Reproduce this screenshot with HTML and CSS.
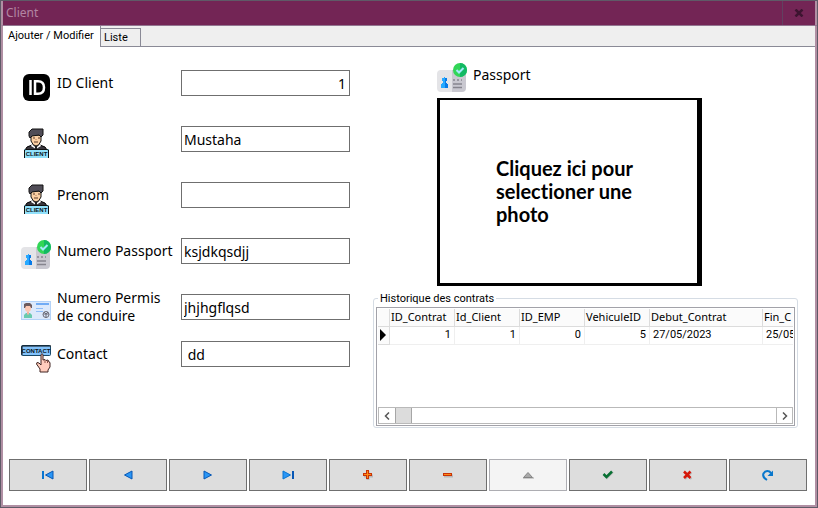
FILE: index.html
```html
<!DOCTYPE html>
<html lang="fr">
<head>
<meta charset="utf-8">
<title>Client</title>
<link rel="stylesheet" href="styles.css">
</head>
<body>
<svg class="defs" aria-hidden="true">
  <defs>
    <symbol id="client" viewBox="0 0 30 30">
      <path d="M4 22 6 19 11 17H19L24 19 26 22Z" fill="#39363d" stroke="#000"/>
      <path d="M11 16 15 20 19 16 20 18 15 21 10 18Z" fill="#fff"/>
      <path d="M14 18H16V21H14Z" fill="#222"/>
      <path d="M10 7H20V13Q18 18 15 18Q12 18 10 13Z" fill="#fbd0a4" stroke="#111"/>
      <path d="M8 8V4L11 1H22V7L20 9 18 7 11 8 9 10Z" fill="#504d57" stroke="#111"/>
      <path d="M12 10H14M17 10H19M13 14H17" stroke="#5a3928"/>
      <path d="M15 11V12" stroke="#b87c55"/>
      <path d="M3 21H28V30H3Z" fill="#92e1fb"/>
      <path d="M3.500 30V22L5 21.500H26L27.500 22V30" fill="none" stroke="#111"/>
      <text x="15.500" y="28" text-anchor="middle" class="tag">CLIENT</text>
    </symbol>
    <symbol id="passport" viewBox="0 0 30 30">
      <path d="M4 7H15V29H4Q0 29 0 25V11Q0 7 4 7Z" fill="#e4e4e7"/>
      <path d="M15 7H29V25Q29 29 25 29H15Z" fill="#c9c8d0"/>
      <path d="M7 14H8V15H10V18H9V20H10V21H11V25H4V21H5V20H6V18H5V15H7Z" fill="#27a9ff"/>
      <path d="M8 15H10V18H9V20H10V21H11V25H8Z" fill="#087be8"/>
      <path d="M16 17H18M20 17H22M24 17H25M16 21H25M16 24.500H25" stroke="#86858e" stroke-width="1.500"/>
      <circle cx="23" cy="7" r="7" fill="#32d657"/>
      <path d="M23 0A7 7 0 0 1 23 14Z" fill="#12b964"/>
      <path d="M19.500 7 22 9.500 26.500 5" fill="none" stroke="#a4e9fb" stroke-width="2"/>
    </symbol>
  </defs>
</svg>
<div class="window">
  <header class="titlebar">
    <h1>Client</h1>
    <button class="close" type="button" aria-label="Fermer">
      <svg width="10" height="8" viewBox="0 0 10 8"><path d="M1.500 .5 8.500 7.500M8.500 .5 1.500 7.500" stroke="#3d1430" stroke-width="2.500"/></svg>
    </button>
  </header>
  <nav class="tabs" role="tablist">
    <button class="tab active" type="button" role="tab" aria-selected="true">Ajouter / Modifier</button>
    <button class="tab" type="button" role="tab" aria-selected="false">Liste</button>
  </nav>
  <main class="page">
    <div class="columns">
      <form class="fields">
        <div class="field">
          <svg class="icon" viewBox="0 0 30 30"><rect x="2" y="2" width="27" height="27" rx="6"/><path d="M9.500 8V23M14 9.250H17Q23 9.250 23 15.500T17 21.750H14Z" fill="none" stroke="#fff" stroke-width="2.500"/></svg>
          <label for="id">ID Client</label><input id="id" class="number" value="1">
        </div>
        <div class="field">
          <svg class="icon"><use href="#client"/></svg>
          <label for="nom">Nom</label><input id="nom" value="Mustaha">
        </div>
        <div class="field">
          <svg class="icon"><use href="#client"/></svg>
          <label for="prenom">Prenom</label><input id="prenom">
        </div>
        <div class="field">
          <svg class="icon"><use href="#passport"/></svg>
          <label for="num">Numero Passport</label><input id="num" value="ksjdkqsdjj">
        </div>
        <div class="field">
          <svg class="icon" viewBox="0 0 30 30">
            <rect y="5" width="30" height="19" fill="#b4d3f8"/><rect x="1" y="6" width="28" height="17" fill="#dce9fb"/>
            <path d="M3 22V19L5 17H9L11 19V22Z" fill="#69caae"/><path d="M6 15H8V18L7 19 6 18Z" fill="#f2b3a0"/>
            <path d="M4 9H10V14L8 16H6L4 14Z" fill="#fbc7b3"/><path d="M3 12V8L5 7H9L11 9V12H10L9 10H5L4 12Z" fill="#6b5a5e"/>
            <path d="M15 8H28" stroke="#71acf5" stroke-width="2"/><path d="M15 12.500H22M15 15.500H22" stroke="#8ebdf8"/>
            <circle cx="25" cy="18.500" r="3" fill="none" stroke="#6b6b76" stroke-width="1"/><path d="M22 18H28M25 18V22M23 16 25 18 27 16" fill="none" stroke="#6b6b76"/>
          </svg>
          <label for="permis">Numero Permis<br>de conduire</label><input id="permis" value="jhjhgflqsd">
        </div>
        <div class="field last">
          <svg class="icon" viewBox="0 0 30 30">
            <rect x=".5" y="2.500" width="29" height="10" rx="1" fill="#82c2fb" stroke="#184969"/>
            <path d="M1 12V3H30" fill="none" stroke="#111"/>
            <text x="15" y="9.500" text-anchor="middle" class="tag">CONTACT</text>
            <path d="M20 22V11.500Q21 10 22 11.500V17L24 16.500 25 17.500 27 17 28 19 29 19.500V24L27 27V29H19V26L15.500 21 16 19.500 18 20Z" fill="#ffcdbd" stroke="#402522"/>
            <path d="M24 17V20M26.500 18V20" stroke="#8d5549"/>
          </svg>
          <label for="contact">Contact</label><input id="contact" value=" dd">
        </div>
      </form>
      <section class="side">
        <div class="passport">
          <div class="caption"><svg class="icon"><use href="#passport"/></svg><span>Passport</span></div>
          <button class="photo" type="button">Cliquez ici pour<br>selectioner une<br>photo</button>
        </div>
        <fieldset class="history">
          <legend>Historique des contrats</legend>
          <div class="grid">
            <div class="viewport">
              <table>
                <colgroup><col class="c-mark"><col class="c-num"><col class="c-num"><col class="c-num"><col class="c-num"><col class="c-date"><col></colgroup>
                <thead><tr><th></th><th>ID_Contrat</th><th>Id_Client</th><th>ID_EMP</th><th>VehiculeID</th><th>Debut_Contrat</th><th>Fin_C</th></tr></thead>
                <tbody><tr><th><svg class="marker" width="6" height="12" viewBox="0 0 6 12"><path d="M0 0 6 6 0 12Z"/></svg></th><td class="n">1</td><td class="n">1</td><td class="n">0</td><td class="n">5</td><td>27/05/2023</td><td>25/05</td></tr></tbody>
              </table>
            </div>
            <div class="scroll">
              <button type="button" aria-label="Gauche"><svg width="6" height="8" viewBox="0 0 6 8"><path d="M5 .5 1.500 4 5 7.500" fill="none" stroke="#555" stroke-width="1.500"/></svg></button>
              <span class="thumb"></span>
              <button class="end" type="button" aria-label="Droite"><svg width="6" height="8" viewBox="0 0 6 8"><path d="M1 .5 4.500 4 1 7.500" fill="none" stroke="#555" stroke-width="1.500"/></svg></button>
            </div>
          </div>
        </fieldset>
      </section>
    </div>
    <div class="navigator">
      <button type="button" aria-label="Premier"><svg viewBox="0 0 14 12"><path d="M2 2V10" stroke="#0875d1" stroke-width="2"/><path d="M12 2V10L4.500 6Z" fill="#2a96f5" stroke="#0757b5"/></svg></button>
      <button type="button" aria-label="Precedent"><svg viewBox="0 0 14 12"><path d="M11 2V10L3.500 6Z" fill="#2a96f5" stroke="#0757b5"/></svg></button>
      <button type="button" aria-label="Suivant"><svg viewBox="0 0 14 12"><path d="M3 2V10L10.500 6Z" fill="#2a96f5" stroke="#0757b5"/></svg></button>
      <button type="button" aria-label="Dernier"><svg viewBox="0 0 14 12"><path d="M2 2V10L9.500 6Z" fill="#2a96f5" stroke="#0875d1"/><path d="M12 2V10" stroke="#0757b5" stroke-width="2"/></svg></button>
      <button type="button" aria-label="Ajouter"><svg viewBox="0 0 14 12"><path d="M7 2V11M3 7H12" stroke="#b9b9b9" stroke-width="3"/><path d="M6.500 1V10M2 5.500H11" stroke="#c93306" stroke-width="3"/><path d="M6.500 2V9M3 5.500H10" stroke="#ff8a17"/></svg></button>
      <button type="button" aria-label="Supprimer"><svg viewBox="0 0 14 12"><path d="M3 7H12" stroke="#b9b9b9" stroke-width="3"/><path d="M2 5.500H11" stroke="#c93306" stroke-width="3"/><path d="M3 5.500H10" stroke="#ff8a17"/></svg></button>
      <button type="button" aria-label="Modifier" disabled><svg viewBox="0 0 14 12"><path d="M2 9H13" stroke="#ccc" stroke-width="2"/><path d="M2.500 8.500H11.500L7 3.500Z" fill="#aaa" stroke="#858585"/></svg></button>
      <button type="button" aria-label="Valider"><svg viewBox="0 0 14 12"><path d="M3 6 6 9 12 3" fill="none" stroke="#bbb" stroke-width="2"/><path d="M2.500 5 5.500 8 11 2.500" fill="none" stroke="#087033" stroke-width="2.500"/></svg></button>
      <button type="button" aria-label="Annuler"><svg viewBox="0 0 14 12"><path d="M4 3.500 10.500 10M10.500 3.500 4 10" stroke="#bbb" stroke-width="2"/><path d="M3 2.500 9.500 9M9.500 2.500 3 9" stroke="#d51709" stroke-width="2.500"/></svg></button>
      <button type="button" aria-label="Actualiser"><svg viewBox="0 0 14 12"><path d="M6 11Q1 8 2.500 4.500Q4.500 1 8.500 2.500L10 4" fill="none" stroke="#0877cc" stroke-width="2"/><path d="M12 1.500V7H6.500Z" fill="#0877cc"/></svg></button>
    </div>
  </main>
</div>
</body>
</html>
```
FILE: styles.css
```css
* { box-sizing: border-box; }
body { margin: 0; font-family: "Noto Sans", "Open Sans", sans-serif; color: #000; }
button, input { font: inherit; color: inherit; margin: 0; padding: 0; }
.defs { position: absolute; width: 0; height: 0; }
.tag { font: bold 6px "Liberation Sans", sans-serif; fill: #0b1622; }

.window { min-height: 100vh; display: flex; flex-direction: column; border: 1px solid #5f5a67; background: #fff; }
.titlebar { display: flex; height: 25px; background: #732555; border-bottom: 1px solid #927590; border-left: 2px solid #b08fa3; }
.titlebar h1 { flex: 1; margin: 0; padding-left: 3px; font-size: 12px; font-weight: 400; line-height: 24px; color: #b285a3; }
.close { width: 35px; display: flex; align-items: center; justify-content: center; background: none; border: 0; border-left: 1px solid #624060; border-right: 2px solid #b08fa3; }

.tabs { display: flex; align-items: flex-end; height: 21px; background: #efefef; border: 0 solid #b08fa3; border-width: 0 2px; box-shadow: inset 0 -1px #8a8a96; }
.tab { width: 40px; height: 19px; padding: 0 0 0 3px; text-align: left; white-space: nowrap; font: 11px/18px Roboto, sans-serif; background: #efefef; border: 1px solid #8a8a96; border-left: 0; }
.tab.active { height: 21px; width: 98px; padding: 0 0 2px 5px; background: #fff; border-width: 0 1px 0 0; }

.page { flex: 1; display: flex; flex-direction: column; border: solid #b08fa3; border-width: 0 2px 2px; padding: 8px 8px 14px 6px; }
.columns { flex: 1; display: flex; gap: 23px; padding: 0 9px 0 12px; }
.fields { flex: none; width: 329px; }
.field { display: flex; align-items: center; height: 56px; }
.field.last { height: 38px; }
.icon { flex: none; width: 30px; height: 30px; margin-top: 8px; }
.field label { width: 124px; margin-left: 6px; font-size: 14px; line-height: 18px; white-space: nowrap; }
.field input { width: 169px; height: 26px; padding: 0 3px 0 2px; font-size: 14px; background: #fff; border: 1px solid #6f6f6f; border-radius: 0; white-space: pre; }
.field .number { text-align: right; }

.side { flex: 1; min-width: 0; }
.passport { width: 265px; margin-left: 64px; }
.caption { display: flex; align-items: center; gap: 6px; height: 43px; font-size: 14px; }
.caption .icon { margin-top: 2px; }
.caption span { padding-bottom: 4px; }
.photo { display: block; width: 100%; height: 188px; padding-left: 56px; text-align: left; font: bold 20px/23px Lato, sans-serif; font-variant-ligatures: none; background: #fff; border: solid #000; border-width: 2px 5px 3px 3px; }

.history { position: relative; min-width: 0; height: 130px; margin: 12px 0 0; padding: 8px 2px 2px; border: 1px solid #d5dce4; border-radius: 3px; }
.history legend { position: absolute; top: -8px; left: 4px; padding: 0 2px; background: #fff; font: 11px/16px Roboto, sans-serif; }
.grid { display: flex; flex-direction: column; height: 119px; padding: 1px; border: 1px solid #a2a2a9; }
.viewport { flex: 1; overflow: hidden; min-height: 0; }
table { width: 100%; table-layout: fixed; border-collapse: separate; border-spacing: 0; font-size: 11px; line-height: 16px; white-space: nowrap; }
.c-mark { width: 12px; }
.c-num { width: 65px; }
.c-date { width: 113px; }
th, td { height: 18px; padding: 0 0 1px 1px; overflow: hidden; text-align: left; font-weight: 400; border: solid #efefef; border-width: 0 1px 1px 0; }
th { background: #fbfbfb; border-color: #dcdcdc; }
td { padding-left: 3px; font-family: Roboto, sans-serif; }
.n { text-align: right; padding-right: 3px; }
tr > :last-child { border-right: 0; }
.marker { display: block; margin-left: 1px; }
.scroll { display: flex; height: 17px; border: 1px solid #b9b9b9; }
.scroll button { display: flex; align-items: center; justify-content: center; width: 16px; background: #fff; border: 0; }
.scroll .end { margin-left: auto; border-left: 1px solid #b9b9b9; }
.thumb { width: 17px; background: #dcdcdc; border: 1px solid #a6a6a6; border-width: 0 1px; }

.navigator { display: grid; grid-template-columns: repeat(10, 1fr); gap: 2px; }
.navigator button { display: flex; align-items: center; justify-content: center; height: 32px; background: #ddd; border: 1px solid #6f6f6f; }
.navigator button:disabled { background: #f4f4f4; border-color: #adadb2; }
.navigator svg { width: 14px; height: 12px; }
```
